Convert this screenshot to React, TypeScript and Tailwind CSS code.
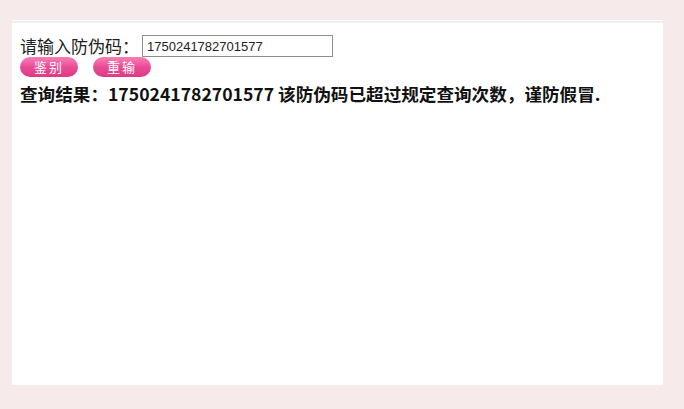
import React, { useState } from 'react';

const App: React.FC = () => {
    const [code, setCode] = useState('1750241782701577');
    const result = '1750241782701577';

    return (
        <div className="w-[684px] h-[409px] bg-[#f7eaea] pt-[20px] pl-[12px] overflow-hidden">
            <div className="w-[651px] h-[365px] bg-white border-t border-t-white">
                <div className="h-full border-t-2 border-t-[#eeeeee] pl-[8px] pt-[12px] font-['Microsoft_YaHei','Noto_Sans_CJK_SC',sans-serif] text-[#222]">
                    {/* Query form */}
                    <div className="flex items-center h-[22px]">
                        <span className="text-[17px] leading-[22px]">请输入防伪码：</span>
                        <input
                            value={code}
                            onChange={(e) => setCode(e.target.value)}
                            className="ml-[3px] w-[191px] h-[22px] border border-[#8f8f8f] px-[4px] text-[13px] text-[#222] font-['Liberation_Sans',Arial,sans-serif] outline-none"
                        />
                    </div>
                    <div className="flex gap-[15px]">
                        <button className="w-[58px] h-[20px] rounded-full bg-gradient-to-b from-[#f77fb8] via-[#ea4b95] to-[#dd3a84] text-white text-[13px] leading-[20px] tracking-[2px]">
                            鉴别
                        </button>
                        <button className="w-[58px] h-[20px] rounded-full bg-gradient-to-b from-[#f77fb8] via-[#ea4b95] to-[#dd3a84] text-white text-[13px] leading-[20px] tracking-[2px]">
                            重输
                        </button>
                    </div>
                    {/* Result */}
                    <p className="mt-[5px] text-[17.6px] leading-[24px] font-bold text-[#111]">
                        查询结果：{result} 该防伪码已超过规定查询次数，谨防假冒.
                    </p>
                </div>
            </div>
        </div>
    );
};

export default App;
